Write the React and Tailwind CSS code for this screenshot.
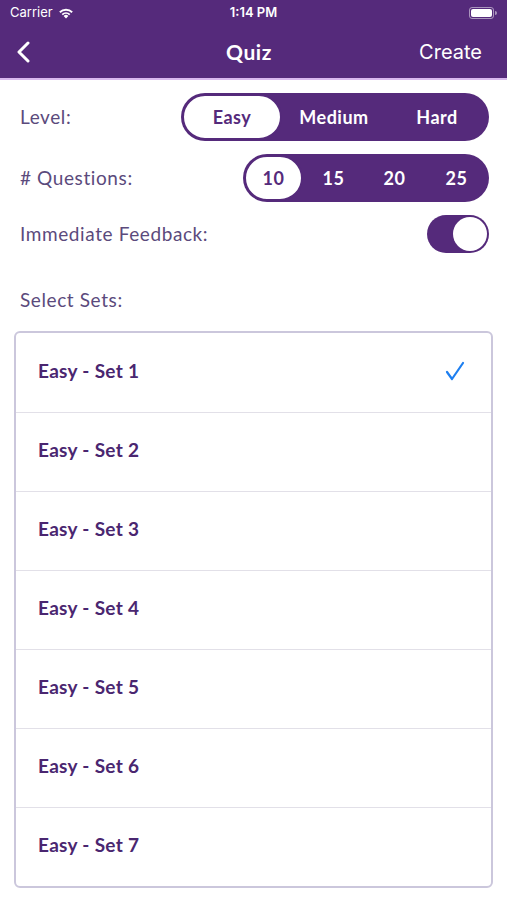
import { useState } from "react";

const sets = [1, 2, 3, 4, 5, 6, 7];

function Segmented({ options, value, onChange, widths }) {
  return (
    <div className="flex h-[48px] items-stretch rounded-full bg-[#552a7b] p-[1px]">
      {options.map((opt, i) => {
        const active = opt === value;
        return (
          <button
            key={opt}
            type="button"
            onClick={() => onChange(opt)}
            style={{ width: widths[i] }}
            className={
              active
                ? "flex items-center justify-center rounded-full border-2 border-[#552a7b] bg-white text-[18px] font-bold tracking-[0.5px] text-[#552a7b]"
                : "flex items-center justify-center rounded-full text-[18px] font-bold tracking-[0.5px] text-white"
            }
          >
            {opt}
          </button>
        );
      })}
    </div>
  );
}

export default function App() {
  const [level, setLevel] = useState("Easy");
  const [count, setCount] = useState("10");
  const [feedback, setFeedback] = useState(true);
  const [selected, setSelected] = useState([1]);

  const toggleSet = (n) =>
    setSelected((s) => (s.includes(n) ? s.filter((x) => x !== n) : [...s, n]));

  return (
    <div className="min-h-[900px] w-[507px] bg-white font-['Lato',sans-serif]">
      <div className="bg-[#552a7b] text-white">
        <div className="flex h-[26px] items-center justify-between px-[10px] font-['Inter',sans-serif]">
          <div className="flex w-[120px] items-center gap-[5px] text-[13px]">
            Carrier
            <svg width="16" height="12" viewBox="0 0 16 12" fill="white">
              <path d="M8 11.5 5.6 9a3.4 3.4 0 0 1 4.8 0Z" />
              <path d="M3.6 7a6.3 6.3 0 0 1 8.8 0l-1.3 1.3a4.5 4.5 0 0 0-6.2 0Z" />
              <path d="M1.2 4.6a9.7 9.7 0 0 1 13.6 0l-1.3 1.3a7.9 7.9 0 0 0-11 0Z" />
            </svg>
          </div>
          <div className="text-[13px] font-semibold">1:14 PM</div>
          <div className="flex w-[120px] justify-end">
            <div className="flex items-center">
              <div className="flex h-[12px] w-[25px] items-center rounded-[3px] border border-white/50 p-[1px]">
                <div className="h-full w-full rounded-[2px] bg-white" />
              </div>
              <div className="ml-[1px] h-[4px] w-[2px] rounded-r-sm bg-white/50" />
            </div>
          </div>
        </div>
        <div className="flex h-[54px] items-center justify-between border-b-2 border-[#d9b8ef] pl-[16px] pr-[25px]">
          <button type="button" className="w-[80px]">
            <svg width="14" height="22" viewBox="0 0 14 22" fill="none" stroke="white" strokeWidth="3" strokeLinecap="round" strokeLinejoin="round">
              <path d="M12 2 3 11l9 9" />
            </svg>
          </button>
          <div className="text-[21px] font-bold tracking-[0.6px]">Quiz</div>
          <button type="button" className="w-[80px] text-right font-['Inter',sans-serif] text-[20px]">
            Create
          </button>
        </div>
      </div>

      <div className="pl-[20px] pr-[18px] pt-[13px] text-[#5b4a7c]">
        <div className="flex items-center justify-between">
          <span className="text-[19px] tracking-[0.6px]">Level:</span>
          <Segmented
            options={["Easy", "Medium", "Hard"]}
            value={level}
            onChange={setLevel}
            widths={[100, 104, 102]}
          />
        </div>
        <div className="mt-[13px] flex items-center justify-between">
          <span className="text-[19px] tracking-[0.6px]"># Questions:</span>
          <Segmented
            options={["10", "15", "20", "25"]}
            value={count}
            onChange={setCount}
            widths={[59, 61, 61, 63]}
          />
        </div>
        <div className="mt-[13px] flex items-center justify-between">
          <span className="text-[19px] tracking-[0.6px]">Immediate Feedback:</span>
          <button
            type="button"
            onClick={() => setFeedback(!feedback)}
            className={
              feedback
                ? "flex h-[38px] w-[62px] items-center justify-end rounded-full bg-[#552a7b] p-[2px]"
                : "flex h-[38px] w-[62px] items-center justify-start rounded-full bg-gray-200 p-[2px]"
            }
          >
            <span className="h-[34px] w-[34px] rounded-full bg-white" />
          </button>
        </div>
        <div className="mt-[33px] text-[19px] tracking-[0.6px]">Select Sets:</div>
      </div>

      <div className="mx-[14px] mt-[16px] overflow-hidden rounded-[6px] border-2 border-[#cbc7dc]">
        {sets.map((n, i) => (
          <button
            key={n}
            type="button"
            onClick={() => toggleSet(n)}
            className={
              i === 0
                ? "flex h-[79px] w-full items-center justify-between pb-[2px] pl-[22px] pr-[26px]"
                : "flex h-[79px] w-full items-center justify-between border-t border-[#e2e0e8] pb-[2px] pl-[22px] pr-[26px]"
            }
          >
            <span className="text-[19px] font-bold tracking-[0.3px] text-[#4a2670]">Easy - Set {n}</span>
            {selected.includes(n) && (
              <svg width="20" height="20" viewBox="0 0 20 20" fill="none" stroke="#1e7ff0" strokeWidth="2.2" strokeLinecap="round" strokeLinejoin="round">
                <path d="M2 11l5 7L18 2" />
              </svg>
            )}
          </button>
        ))}
      </div>
    </div>
  );
}
